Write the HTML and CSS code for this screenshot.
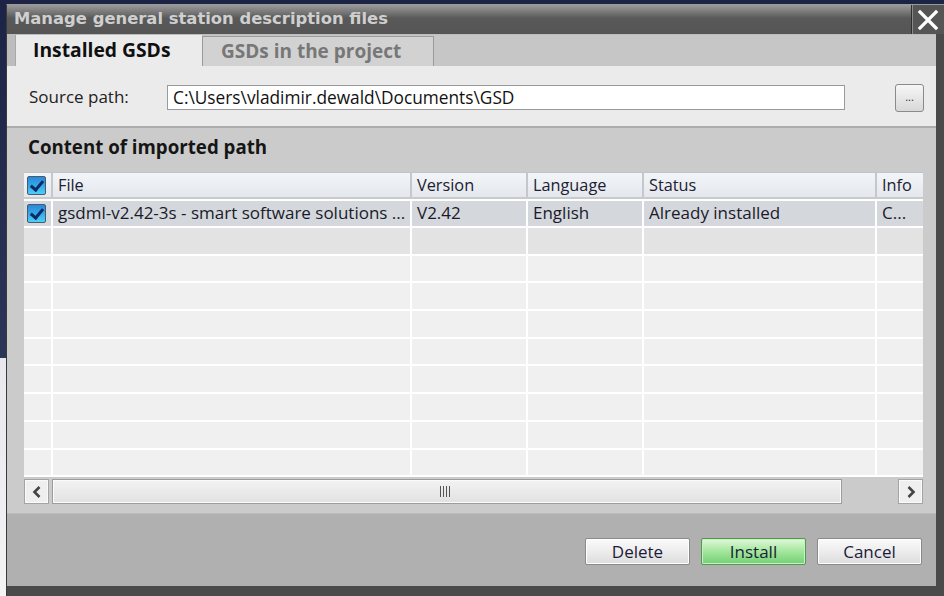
FILE: index.html
```html
<!DOCTYPE html>
<html>
<head>
<meta charset="utf-8">
<link rel="stylesheet" href="styles.css">
</head>
<body>
<div class="window">
  <div class="titlebar">
    <div class="title">Manage general station description files</div>
    <div class="close"><svg width="22" height="22" viewBox="0 0 22 22"><path d="M3 3 L19 19 M19 3 L3 19" stroke="#fff" stroke-width="3.2" stroke-linecap="square"/></svg></div>
  </div>
  <div class="tabs">
    <div class="tab-spacer"></div>
    <div class="tab active">Installed GSDs</div>
    <div class="tab">GSDs in the project</div>
  </div>
  <div class="source">
    <span class="label">Source path:</span>
    <div class="input">C:\Users\vladimir.dewald\Documents\GSD</div>
    <div class="browse">...</div>
  </div>
  <div class="content">
    <div class="heading">Content of imported path</div>
    <div class="table">
      <div class="row header">
        <div class="cell chk"><span class="checkbox"></span></div>
        <div class="cell">File</div>
        <div class="cell">Version</div>
        <div class="cell">Language</div>
        <div class="cell">Status</div>
        <div class="cell">Info</div>
      </div>
      <div class="row selected">
        <div class="cell chk"><span class="checkbox"></span></div>
        <div class="cell">gsdml-v2.42-3s - smart software solutions ...</div>
        <div class="cell">V2.42</div>
        <div class="cell">English</div>
        <div class="cell">Already installed</div>
        <div class="cell">C...</div>
      </div>
      <div class="row empty alt"><div class="cell"></div><div class="cell"></div><div class="cell"></div><div class="cell"></div><div class="cell"></div><div class="cell"></div></div>
      <div class="row empty"><div class="cell"></div><div class="cell"></div><div class="cell"></div><div class="cell"></div><div class="cell"></div><div class="cell"></div></div>
      <div class="row empty"><div class="cell"></div><div class="cell"></div><div class="cell"></div><div class="cell"></div><div class="cell"></div><div class="cell"></div></div>
      <div class="row empty"><div class="cell"></div><div class="cell"></div><div class="cell"></div><div class="cell"></div><div class="cell"></div><div class="cell"></div></div>
      <div class="row empty"><div class="cell"></div><div class="cell"></div><div class="cell"></div><div class="cell"></div><div class="cell"></div><div class="cell"></div></div>
      <div class="row empty"><div class="cell"></div><div class="cell"></div><div class="cell"></div><div class="cell"></div><div class="cell"></div><div class="cell"></div></div>
      <div class="row empty"><div class="cell"></div><div class="cell"></div><div class="cell"></div><div class="cell"></div><div class="cell"></div><div class="cell"></div></div>
      <div class="row empty"><div class="cell"></div><div class="cell"></div><div class="cell"></div><div class="cell"></div><div class="cell"></div><div class="cell"></div></div>
      <div class="row empty"><div class="cell"></div><div class="cell"></div><div class="cell"></div><div class="cell"></div><div class="cell"></div><div class="cell"></div></div>
    </div>
    <div class="hscroll">
      <div class="arrow"><svg width="12" height="14" viewBox="0 0 12 14"><path d="M8.5 2 L3.5 7 L8.5 12" fill="none" stroke="#444" stroke-width="2.6"/></svg></div>
      <div class="track"><span class="grip"></span></div>
      <div class="gap"></div>
      <div class="arrow"><svg width="12" height="14" viewBox="0 0 12 14"><path d="M3.5 2 L8.5 7 L3.5 12" fill="none" stroke="#444" stroke-width="2.6"/></svg></div>
    </div>
  </div>
  <div class="footer">
    <div class="btn">Delete</div>
    <div class="btn primary">Install</div>
    <div class="btn">Cancel</div>
  </div>
</div>
</body>
</html>
```

FILE: styles.css
```css
html, body {
  margin: 0;
  padding: 0;
}
body {
  width: 944px;
  height: 596px;
  overflow: hidden;
  background: linear-gradient(180deg, #1b2444 0%, #2a3558 60%, #e8e8ee 60%, #f4f4f4 100%);
  font-family: "Open Sans", "Noto Sans", sans-serif;
  padding-top: 4px;
  padding-left: 6px;
  box-sizing: border-box;
}
.window {
  width: 938px;
  height: 592px;
  background: #4a4a4a;
  border-left: 1px solid #3a3a3a;
  border-top: 1px solid #9a9a9a;
  display: flex;
  flex-direction: column;
  padding-right: 8px;
  padding-bottom: 10px;
  box-sizing: border-box;
}
.titlebar {
  height: 29px;
  flex-shrink: 0;
  display: flex;
  align-items: stretch;
  background: linear-gradient(180deg, #9a9a9a 0%, #777 25%, #595959 45%, #555 100%);
  margin-right: -8px;
}
.title {
  flex: 1;
  color: #cfcfcf;
  font-weight: 700;
  padding-left: 7px;
  line-height: 27px;
  font-family: "DejaVu Sans", sans-serif;
  font-size: 16.4px;
}
.close {
  width: 32px;
  display: flex;
  align-items: center;
  justify-content: center;
  border-left: 1px solid #2e2e2e;
  box-shadow: inset 1px 0 0 #8a8a8a;
  background: #555;
}
.tabs {
  height: 32px;
  flex-shrink: 0;
  background: #c6c6c6;
  display: flex;
  align-items: flex-end;
  border-top: 1px solid #bdbdbd;
  box-sizing: border-box;
}
.tab-spacer {
  width: 8px;
  align-self: stretch;
  background: #bdbdbd;
  border-right: 1px solid #a8a8a8;
}
.tab {
  height: 30px;
  padding: 0 0 0 18px;
  width: 232px;
  box-sizing: border-box;
  background: #d2d2d2;
  color: #777;
  font-weight: 700;
  font-size: 19px;
  line-height: 28px;
  border: 1px solid #9a9a9a;
  border-bottom: none;
  white-space: nowrap;
}
.tab.active {
  width: 186px;
  background: #ebebeb;
  color: #101010;
  height: 31px;
  padding-left: 16px;
  border-color: #ebebeb;
  font-size: 19.3px;
}
.source {
  height: 62px;
  flex-shrink: 0;
  background: #ebebeb;
  display: flex;
  align-items: center;
  padding-left: 22px;
  border-bottom: 2px solid #adadad;
  box-sizing: border-box;
}
.label {
  width: 138px;
  font-size: 17px;
  color: #222;
}
.input {
  width: 678px;
  height: 25px;
  box-sizing: border-box;
  background: #fff;
  border: 1px solid #9a9a9a;
  font-size: 17.3px;
  line-height: 23px;
  padding-left: 5px;
  color: #111;
  margin-top: 2px;
  white-space: nowrap;
}
.browse {
  margin-left: 50px;
  width: 29px;
  height: 28px;
  box-sizing: border-box;
  border: 1px solid #8a8a8a;
  border-radius: 3px;
  background: linear-gradient(180deg, #f6f6f6, #d8d8d8);
  font-size: 11px;
  text-align: center;
  line-height: 24px;
  color: #333;
  margin-top: 4px;
}
.content {
  flex: 1;
  background: #cbcbcb;
  padding-left: 17px;
  display: flex;
  flex-direction: column;
}
.heading {
  flex-shrink: 0;
  font-weight: 700;
  font-size: 18.7px;
  color: #151515;
  height: 44px;
  line-height: 38px;
  padding-left: 4px;
}
.table {
  flex-shrink: 0;
  width: 899px;
  background: #f0f0f0;
  display: flex;
  flex-direction: column;
}
.row {
  flex-shrink: 0;
  display: grid;
  grid-template-columns: 29px 359px 116px 116px 233px 46px;
  height: 27.7px;
}
.row.empty .cell {
  border-right: 2px solid #fff;
  border-bottom: 2px solid #fff;
  box-sizing: border-box;
}
.row.alt { background: #e3e3e3; }
.row.header {
  height: 27px;
  background: linear-gradient(180deg, #f2f5f8 0%, #e4e8ec 100%);
  border-top: 1px solid #c0c4c8;
  border-bottom: 2px solid #c8cacc;
  box-sizing: border-box;
}
.row.header .cell {
  border-right: 2px solid #c4c8cc;
  font-size: 16.3px;
  line-height: 24px;
  padding-left: 5px;
  color: #202030;
  box-sizing: border-box;
  white-space: nowrap;
  overflow: hidden;
}
.row.selected {
  height: 29px;
  background: #d4d8dd;
  border-top: 2px solid #fff;
  border-bottom: 2px solid #fff;
  box-sizing: border-box;
}
.row.selected .cell {
  border-right: 2px solid #fff;
  font-size: 17px;
  line-height: 24px;
  padding-left: 5px;
  color: #1a1a2a;
  box-sizing: border-box;
  white-space: nowrap;
  overflow: hidden;
}
.row .cell:last-child { border-right: none; }
.row.header .cell.chk, .row.selected .cell.chk {
  padding-left: 3px;
  display: flex;
  align-items: center;
}
.checkbox {
  width: 19px;
  height: 19px;
  box-sizing: border-box;
  border: 1px solid #4a5a6a;
  border-radius: 2px;
  background: linear-gradient(180deg, #2a88d8 0%, #34a8e8 50%, #4cd0f8 100%);
  position: relative;
  display: block;
}
.checkbox::after {
  content: "";
  position: absolute;
  left: 5px;
  top: 1px;
  width: 5px;
  height: 10px;
  border-right: 3px solid #0d2a66;
  border-bottom: 3px solid #0d2a66;
  transform: rotate(40deg);
}
.hscroll {
  flex-shrink: 0;
  width: 899px;
  height: 25px;
  margin-top: 2px;
  display: flex;
  align-items: stretch;
}
.arrow {
  width: 25px;
  box-sizing: border-box;
  border: 1px solid #a4a4a4;
  background: #efefef;
  box-shadow: inset 0 0 0 1px #fafafa;
  display: flex;
  align-items: center;
  justify-content: center;
}
.track {
  margin-left: 3px;
  width: 790px;
  box-sizing: border-box;
  border: 1px solid #9c9c9c;
  background: linear-gradient(180deg, #f2f2f2 0%, #e2e2e2 100%);
  box-shadow: inset 0 0 0 1px #fafafa;
  display: flex;
  align-items: center;
  justify-content: center;
}
.grip {
  width: 10px;
  height: 11px;
  background: repeating-linear-gradient(90deg, #555 0 1px, transparent 1px 3px);
  margin-left: -4px;
}
.gap {
  width: 56px;
}
.footer {
  height: 73px;
  flex-shrink: 0;
  background: #b0b0b0;
  border-top: 1px solid #bcbcbc;
  display: flex;
  align-items: center;
  justify-content: flex-end;
  gap: 11px;
  padding-right: 14px;
  padding-top: 2px;
  box-sizing: border-box;
}
.btn {
  width: 105px;
  height: 27px;
  box-sizing: border-box;
  border: 1px solid #8a8a8a;
  border-radius: 2px;
  background: linear-gradient(180deg, #fafafa 0%, #eeeeee 45%, #dcdcdc 100%);
  box-shadow: inset 0 0 0 1px #fff;
  text-align: center;
  font-size: 17px;
  line-height: 25px;
  color: #1c1c3a;
}
.btn.primary {
  border-color: #4e9a4e;
  background: linear-gradient(180deg, #e2f8dc 0%, #a8e8a0 45%, #74d074 100%);
  box-shadow: inset 0 0 0 1px #c8f0c0;
}
```
